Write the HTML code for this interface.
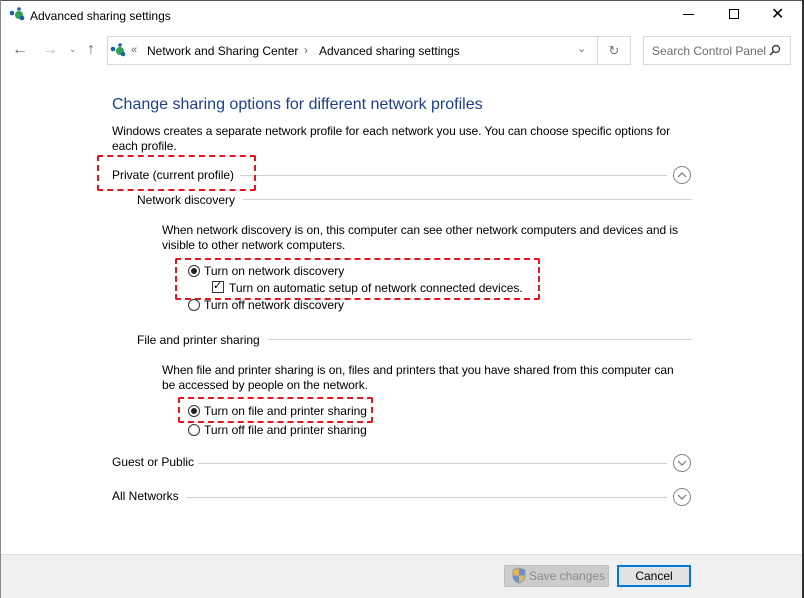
<!DOCTYPE html>
<html><head><meta charset="utf-8"><style>
*{margin:0;padding:0;box-sizing:border-box}
body{width:804px;height:598px;position:relative;background:#fff;font-family:"Liberation Sans",sans-serif;font-size:12px;color:#000;overflow:hidden}
.a{position:absolute;white-space:nowrap}
.p{letter-spacing:-0.06px}
.line{position:absolute;height:1px;background:#d0d0d0}
.dash{position:absolute;border:2px dashed #e8141e;border-radius:2px}
.rad{position:absolute;width:12px;height:12px;border:1px solid #333;border-radius:50%;background:#fff}
.rad.on::after{content:"";position:absolute;left:2px;top:2px;width:6px;height:6px;border-radius:50%;background:#222}
.circ{position:absolute;width:18px;height:18px;border:1px solid #888;border-radius:50%}
</style></head><body>
<div style="position:absolute;left:0;top:0;width:804px;height:1px;background:#555"></div>
<div style="position:absolute;right:0;top:0;width:2px;height:598px;background:#333"></div>
<div style="position:absolute;left:0;top:0;width:1px;height:598px;background:#888"></div>
<svg class="a" style="left:9px;top:7px" width="18" height="14"><circle cx="3" cy="6" r="2.3" fill="#1a5fb4"/><circle cx="10" cy="8" r="4" fill="#2ea44f"/><circle cx="10" cy="2" r="1.8" fill="#1a5fb4"/><circle cx="13" cy="11" r="2.3" fill="#1a5fb4"/></svg>
<div class="a" style="left:30px;top:9px;font-size:12px">Advanced sharing settings</div>
<div class="a" style="left:683px;top:14px;width:11px;height:1px;background:#000"></div>
<div class="a" style="left:729px;top:9px;width:10px;height:10px;border:1px solid #000"></div>
<div class="a" style="left:771px;top:4px;font-size:16px">✕</div>
<div class="a" style="left:12px;top:41px;font-size:16px;color:#666">←</div>
<div class="a" style="left:42px;top:41px;font-size:16px;color:#bbb">→</div>
<div class="a" style="left:69px;top:44px;font-size:9px;color:#777">⌄</div>
<div class="a" style="left:87px;top:41px;font-size:16px;color:#666">↑</div>
<div class="a" style="left:107px;top:36px;width:491px;height:29px;border:1px solid #d9d9d9"></div>
<div class="a" style="left:597px;top:36px;width:34px;height:29px;border:1px solid #d9d9d9;text-align:center;line-height:27px;color:#777;font-size:13px">↻</div>
<svg class="a" style="left:110px;top:43px" width="18" height="14"><circle cx="3" cy="6" r="2.3" fill="#1a5fb4"/><circle cx="10" cy="8" r="4" fill="#2ea44f"/><circle cx="10" cy="2" r="1.8" fill="#1a5fb4"/><circle cx="13" cy="11" r="2.3" fill="#1a5fb4"/></svg>
<div class="a" style="left:131px;top:44px;color:#666;font-size:11px">«</div>
<div class="a" style="left:147px;top:44px">Network and Sharing Center</div>
<div class="a" style="left:304px;top:43px;color:#666">›</div>
<div class="a" style="left:319px;top:44px">Advanced sharing settings</div>
<div class="a" style="left:577px;top:42px;color:#777;font-size:11px">⌄</div>
<div class="a" style="left:643px;top:36px;width:148px;height:29px;border:1px solid #d9d9d9"></div>
<div class="a" style="left:652px;top:44px;color:#6d6d6d">Search Control Panel</div>
<svg class="a" style="left:769px;top:44px" width="12" height="12"><circle cx="7" cy="5" r="3.5" fill="none" stroke="#444" stroke-width="1.4"/><line x1="4.5" y1="7.5" x2="1" y2="11" stroke="#444" stroke-width="1.6"/></svg>
<div class="a" style="left:112px;top:96px;font-size:16px;color:#1e3f8f">Change sharing options for different network profiles</div>
<div class="a p" style="left:112px;top:124px;line-height:15px">Windows creates a separate network profile for each network you use. You can choose specific options for<br>each profile.</div>
<div class="a" style="left:112px;top:168px">Private (current profile)</div>
<div class="line" style="left:240px;top:175px;width:427px"></div>
<div class="circ" style="left:673px;top:166px"></div>
<svg class="a" style="left:677px;top:171px" width="10" height="7"><path d="M1 6 L5 2 L9 6" fill="none" stroke="#777" stroke-width="1.2"/></svg>
<div class="dash" style="left:97px;top:155px;width:159px;height:36px"></div>
<div class="a" style="left:137px;top:193px">Network discovery</div>
<div class="line" style="left:243px;top:199px;width:449px"></div>
<div class="a p" style="left:162px;top:223px;line-height:15px">When network discovery is on, this computer can see other network computers and devices and is<br>visible to other network computers.</div>
<div class="rad on" style="left:188px;top:265px"></div>
<div class="a" style="left:204px;top:264px">Turn on network discovery</div>
<div class="a" style="left:212px;top:281px;width:12px;height:12px;border:1px solid #333"></div>
<div class="a" style="left:213px;top:279px;font-size:11px">✓</div>
<div class="a" style="left:229px;top:281px">Turn on automatic setup of network connected devices.</div>
<div class="dash" style="left:175px;top:258px;width:365px;height:42px"></div>
<div class="rad" style="left:188px;top:299px"></div>
<div class="a" style="left:204px;top:298px">Turn off network discovery</div>
<div class="a" style="left:137px;top:333px">File and printer sharing</div>
<div class="line" style="left:268px;top:339px;width:424px"></div>
<div class="a p" style="left:162px;top:363px;line-height:15px">When file and printer sharing is on, files and printers that you have shared from this computer can<br>be accessed by people on the network.</div>
<div class="rad on" style="left:188px;top:405px"></div>
<div class="a" style="left:204px;top:404px">Turn on file and printer sharing</div>
<div class="dash" style="left:178px;top:397px;width:195px;height:26px"></div>
<div class="rad" style="left:188px;top:424px"></div>
<div class="a" style="left:204px;top:423px">Turn off file and printer sharing</div>
<div class="a" style="left:112px;top:455px">Guest or Public</div>
<div class="line" style="left:198px;top:463px;width:469px"></div>
<div class="circ" style="left:673px;top:454px"></div>
<svg class="a" style="left:677px;top:460px" width="10" height="7"><path d="M1 1 L5 5 L9 1" fill="none" stroke="#777" stroke-width="1.2"/></svg>
<div class="a" style="left:112px;top:489px">All Networks</div>
<div class="line" style="left:186px;top:497px;width:481px"></div>
<div class="circ" style="left:673px;top:488px"></div>
<svg class="a" style="left:677px;top:494px" width="10" height="7"><path d="M1 1 L5 5 L9 1" fill="none" stroke="#777" stroke-width="1.2"/></svg>
<div class="a" style="left:1px;top:554px;width:801px;height:44px;background:#f0f0f0;border-top:1px solid #dfdfdf"></div>
<div class="a" style="left:504px;top:565px;width:105px;height:22px;background:#ccc;border:1px solid #bfbfbf"></div>
<svg class="a" style="left:512px;top:567px" width="14" height="17"><path d="M7 1 L13 3 L13 9 Q13 14 7 16 Q1 14 1 9 L1 3 Z" fill="#e6b84a" stroke="#8a9bb0"/><path d="M7 1 L13 3 L13 8.5 L7 8.5Z M1 8.5 L7 8.5 L7 16 Q1 14 1 9Z" fill="#6d8fc8"/></svg>
<div class="a" style="left:529px;top:569px;color:#8a8a8a">Save changes</div>
<div class="a" style="left:617px;top:565px;width:74px;height:22px;background:#e1e1e1;border:2px solid #0078d7;text-align:center;line-height:18px">Cancel</div>
</body></html>
